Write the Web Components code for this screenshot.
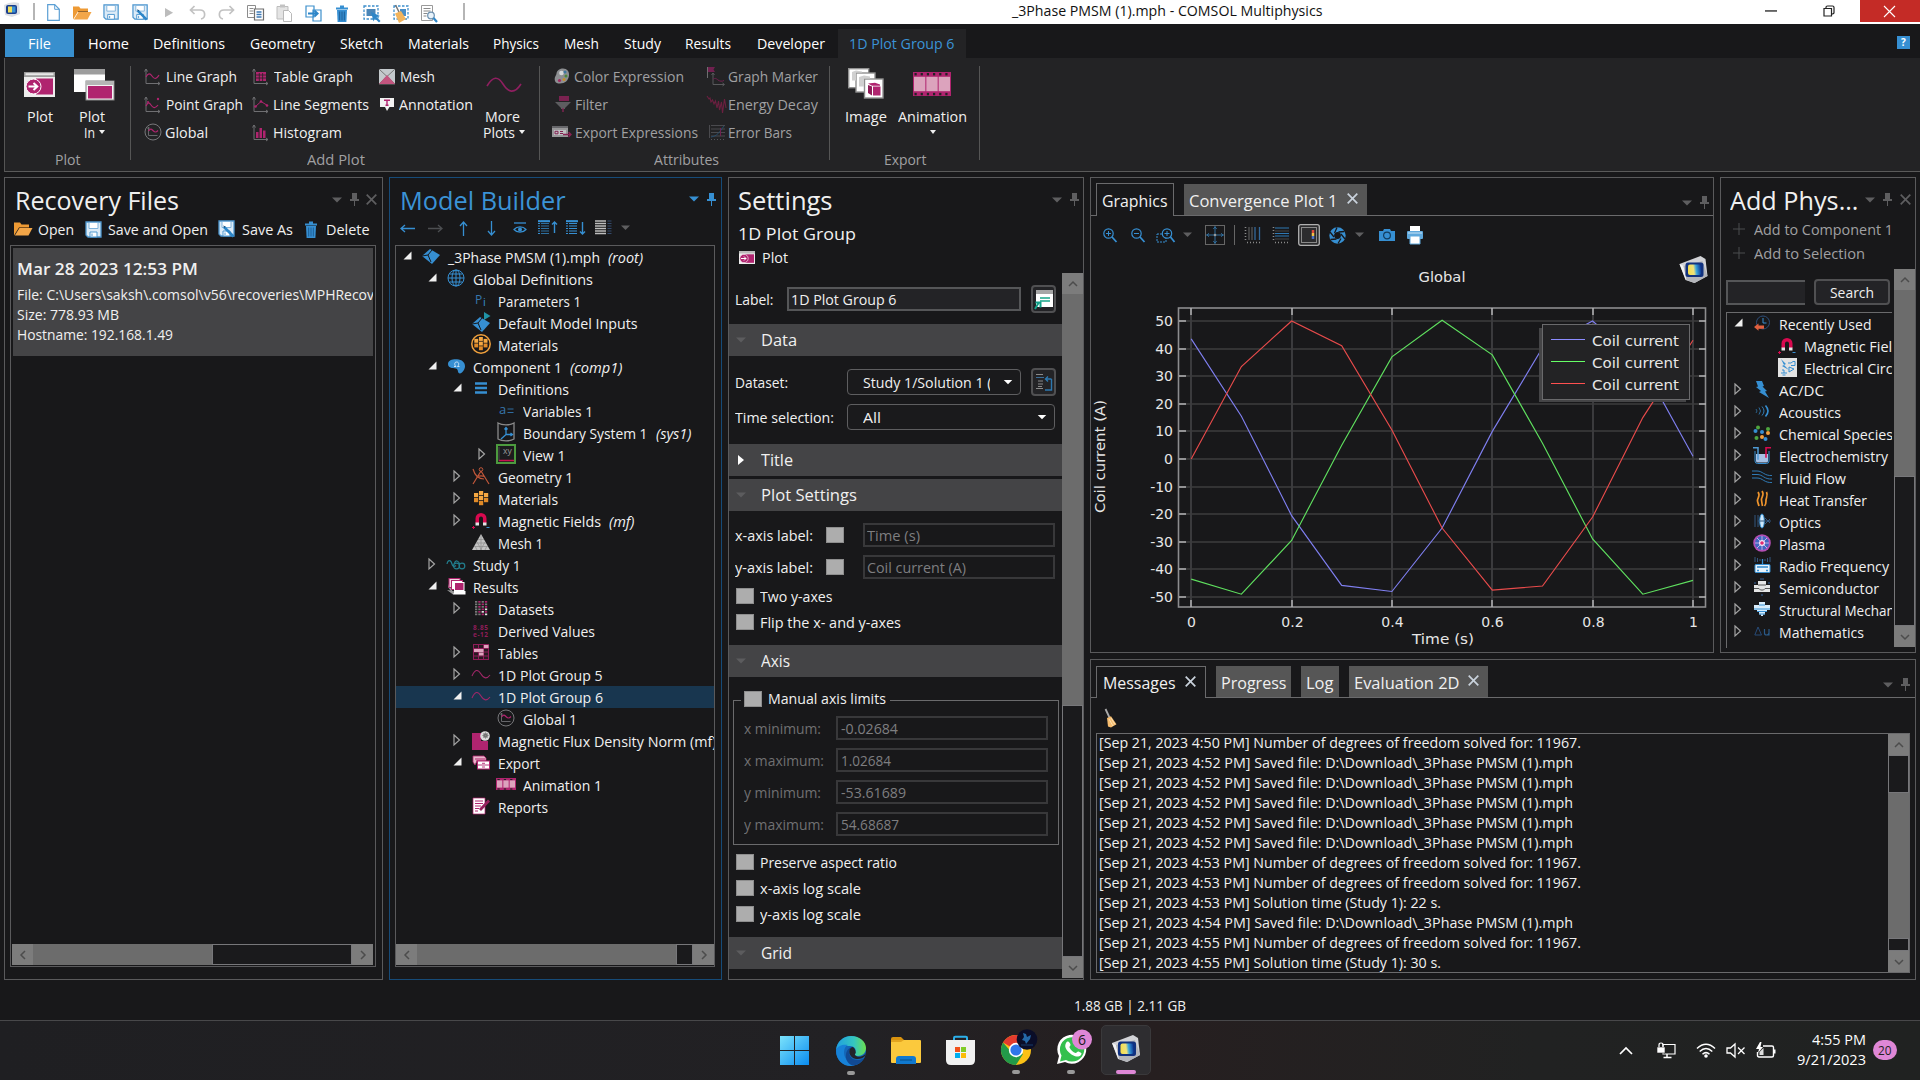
<!DOCTYPE html>
<html lang="en">
<head>
<meta charset="utf-8">
<title>_3Phase PMSM (1).mph - COMSOL Multiphysics</title>
<style>
html,body{margin:0;width:1920px;height:1080px;overflow:hidden;background:#18181a}
body{font-family:"Open Sans","Noto Sans",sans-serif;font-size:14.5px;color:#f0f0f0}
</style>
</head>
<body>
<comsol-app></comsol-app>
<script>
const B='#368fd2', M='#b0246f', G='#8c8c8c';
const sine=(c,w=1.3)=>`<path d="M1 8C5 0 8 2 10 6s5 7 9 0" fill="none" stroke="${c}" stroke-width="${w}"/>`;
const axes=`<path d="M2 1v14.500H16M.5 3.500L2 1l1.500 2.500M14 14l2 1.500-2 1.500" fill="none" stroke="#6f6f72"/>`;
const floppy=(bg)=>`<path d="M1 1h15v15H3l-2-2z" fill="${bg}" stroke="#4e97cf" stroke-width="1.300"/><path d="M4 1.500h9v6H4z" fill="#fff" stroke="#7fb3dc"/><path d="M5 11h7v5H5z" fill="#fff" stroke="#4e97cf"/><path d="M7 12.500v2.500" stroke="#4e97cf"/>`;
const film=(w,h)=>{let s=`<rect width="${w}" height="${h}" fill="${M}"/>`;const n=Math.round(w/6);for(let i=0;i<n;i++){const x=1.5+i*(w-1)/n;s+=`<rect x="${x}" y="1" width="2.200" height="${h*.1}" fill="#232325"/><rect x="${x}" y="${h*.87}" width="2.200" height="${h*.1}" fill="#232325"/>`}const f=(w-4)/3;for(let i=0;i<3;i++)s+=`<rect x="${1+i*(f+1)}" y="${h*.2}" width="${f}" height="${h*.6}" fill="#dca3bd"/>`;return s};
const comsol=`<defs><linearGradient id="g" x1="0" x2="1" y1=".2" y2=".1"><stop offset="0" stop-color="#f5de4e"/><stop offset=".4" stop-color="#efe27a"/><stop offset=".6" stop-color="#3ba6dc"/><stop offset="1" stop-color="#0a2f8f"/></linearGradient></defs><path d="M1 9L22 1l5 3 2 17-13 7-9-3z" fill="#d2d3d7"/><path d="M1 9l4 2 3 14-1-1z" fill="#f4f4f4"/><path d="M5 11L24 6l5 15-13 7-8-3z" fill="#b4b6bb"/><rect x="7" y="7.500" width="18" height="14.500" rx="2.500" fill="#12327f"/><rect x="9.500" y="9.500" width="13" height="10.500" rx="2" fill="url(#g)"/>`;
const magnet=`<path d="M3.500 11V6.500a5.500 5.500 0 0 1 11 0V11h-3.500V6.500a2 2 0 0 0-4 0V11z" fill="#d9094f"/><path d="M3.500 10.500H7V13.500H3.500zM11 10.500h3.500V13.500H11z" fill="#e3e3e3"/><path d="M0 15.500h3M1.500 14v3" stroke="#d9094f"/><path d="M14.500 15.500h3" stroke="${B}"/>`;
const blocks=[[5,0],[0,2],[10,2],[5,5],[0,7],[10,7],[5,10]].map(([x,y])=>`<rect x="${x}" y="${y}" width="4.200" height="4.200" fill="${y>5?'#e08a28':'#f4a742'}"/>`).join('');
const trash=`<path d="M0 3.500h12M4 1.500h4" stroke="${B}" stroke-width="1.800"/><path d="M1 5h10l-.6 12H1.600z" fill="${B}"/><path d="M3.700 6.500v9M6 6.500v9M8.300 6.500v9" stroke="#1c5d94"/>`;
const cube=`<path d="M1 8l8-7 10 6-8 9z" fill="${B}"/><path d="M1 8l6-1 3 7M7 7l4-5" stroke="#18181a" fill="none"/>`;
const lines=(n,w,c,x=0)=>Array.from({length:n},(_,i)=>`<path d="M${x} ${1+i*2.500}h${w}" stroke="${c}"/>`).join('');
const ICONS={
 caret:[10,6,`<path d="M0 .5h10L5 5.500z" fill="currentColor"/>`],
 caretS:[6,4,`<path d="M0 0h6L3 4z" fill="currentColor"/>`],
 caretR:[6,10,`<path d="M0 0l6 5-6 5z" fill="currentColor"/>`],
 pin:[9,13,`<path d="M2 0h5v6h2v2H0V6h2z" fill="currentColor"/><path d="M4.500 8v5" stroke="currentColor"/>`],
 x:[11,11,`<path d="M.7.7l9.600 9.600M10.300.7L.7 10.300" stroke="currentColor" stroke-width="1.700"/>`],
 open:[9,9,`<path d="M8.500.5v8H.5z" fill="#f0f0f0"/>`],
 closed:[8,12,`<path d="M1 1l5.500 5L1 11z" fill="none" stroke="#a4a4a4" stroke-width="1.200"/>`],
 none:[1,1,''],
 bar:[2,17,`<rect width="2" height="17" fill="#b5b5b5"/>`],
 newdoc:[13,17,`<path d="M.7.7h7l4.600 4.600v11H.7z" fill="#fff" stroke="#5b9fd4" stroke-width="1.200"/><path d="M7.700.7v4.600h4.600" fill="none" stroke="#5b9fd4"/>`],
 folder:[19,14,`<path d="M0 13.500V.5h6l1.500 2H15v3H5z" fill="#ee9a34"/><path d="M5.500 6H18.500l-4 7.500H.8z" fill="#f3a648"/><path d="M5 5.500h10" stroke="#7b4b14" stroke-width=".8"/>`],
 save:[17,17,floppy('#dcebf7')],
 saveas:[18,18,floppy('#dcebf7')+`<path d="M6 7l9.500 9.500" stroke="#2d86c8" stroke-width="2.600"/><path d="M5 5.500l2.500 1-1 1.500z" fill="#174d7a"/>`],
 play:[10,11,`<path d="M0 0l9.500 5.500L0 11z" fill="#bcbcbc"/>`],
 undo:[18,15,`<path d="M5.500 1L1.500 5l4 4M2 5h9c6 0 6 8 1 9" fill="none" stroke="#c2c2c2" stroke-width="1.700"/>`],
 redo:[18,15,`<path d="M12.500 1l4 4-4 4M16 5H7C1 5 1 13 6 14" fill="none" stroke="#c2c2c2" stroke-width="1.700"/>`],
 copy:[17,16,`<path d="M.5.500h8v12h-8zM2.500 3.500h4M2.500 6h4M2.500 8.500h4" fill="#fff" stroke="#8c8c8c"/><path d="M7.500 4h9v11h-9z" fill="#fff" stroke="#6f6f6f" stroke-width="1.200"/><path d="M9.500 7h5M9.500 9.500h5M9.500 12h5" stroke="#3d79b5" stroke-width="1.300"/>`],
 paste:[17,18,`<path d="M1 2.500h11V15H1z" fill="#e4e4e4" stroke="#bdbdbd"/><path d="M4 .5h5v3H4z" fill="#c2c2c2"/><path d="M7.500 6.500h5l3 3v8h-8z" fill="#fff" stroke="#b9b9b9"/>`],
 dup:[17,17,`<path d="M1 1h8v11H1zM8 5h8v11H8z" fill="#fff" stroke="#3d8fcc" stroke-width="1.200"/><path d="M3 8.500h9.500M9.500 5.500l3.200 3-3.200 3" fill="none" stroke="#2d86c8" stroke-width="1.800"/>`],
 trash:[12,17,trash],
 select:[18,18,`<path d="M1 1h14v13H1z" fill="none" stroke="#3d8fcc" stroke-width="1.300" stroke-dasharray="2.500 1.500"/><path d="M3.500 4h9v7h-9z" fill="#4a86b8"/><path d="M8 7l9 4-3.500 1 4 4-1.500 1.500-4-4-1.500 3z" fill="#2d86c8"/>`],
 selbroom:[18,18,`<path d="M2 1h14v13H2z" fill="none" stroke="#3d8fcc" stroke-width="1.300" stroke-dasharray="2.500 1.500"/><path d="M8 4h6v7H8z" fill="#4a8fc8"/><path d="M3.500 0l4 8" stroke="#777" stroke-width="1.600"/><path d="M3 8.500l6-2.500 5 8-7 4z" fill="#f2b45c"/>`],
 find:[17,18,`<path d="M.5.500h11v15H.5z" fill="#fff" stroke="#9a9a9a"/><path d="M2.500 3.500h7M2.500 6h7M2.500 8.500h4M2.500 11h3" stroke="#8a8a8a"/><circle cx="10" cy="10.500" r="3.300" fill="#e8f3fb" stroke="#6b8fae" stroke-width="1.200"/><path d="M12.500 13l3.500 4" stroke="#2d86c8" stroke-width="2.200"/>`],
 broom:[13,20,`<path d="M1.500 1l4 8.500" stroke="#aaa" stroke-width="1.800"/><path d="M3 10l4-1.700 5.500 8-5.500 3.200-3-1z" fill="#f7bd6f"/><path d="M5 11l4 7M7 10l4 6.500" stroke="#fbe0b4"/>`],
 help:[13,13,`<rect width="13" height="13" fill="${B}"/><text x="6.500" y="10.300" font-size="10" font-weight="700" fill="#fff" text-anchor="middle">?</text>`],
 min:[12,2,`<rect width="12" height="1.300" y=".3" fill="#222"/>`],
 restore:[12,12,`<path d="M1 3.500h7.500V11H1zM3 3.500V2.300Q3 1 4.500 1H9.500Q11 1 11 2.500V7.500Q11 9 8.700 9" fill="none" stroke="#222" stroke-width="1.200"/>`],
 closeW:[13,13,`<path d="M1 1l11 11M12 1L1 12" stroke="#fff" stroke-width="1.100"/>`],
 plot:[31,25,`<rect width="31" height="25" fill="#ededed"/><rect x="0" y="0" width="31" height="5" fill="#9d9d9d"/><rect x="1.500" y="1.200" width="28" height="2" fill="#e8e8e8"/><rect x="12" y="6.500" width="17" height="16" fill="${M}"/><circle cx="9.500" cy="14.500" r="7.500" fill="${M}" stroke="#fff"/><path d="M4.500 14.500h8M9.500 11l3.800 3.500-3.800 3.500" fill="none" stroke="#fff" stroke-width="2"/>`],
 plotS:[16,13,`<rect width="16" height="13" fill="#ededed"/><rect width="16" height="2.500" fill="#bbb"/><rect x="6" y="3.300" width="9" height="8.500" fill="${M}"/><circle cx="5" cy="7.500" r="4.200" fill="${M}" stroke="#fff" stroke-width=".6"/><path d="M2 7.500h5M5 5.500l2 2-2 2" fill="none" stroke="#fff"/>`],
 plotin:[40,31,`<rect width="31" height="23" fill="#fff"/><rect width="31" height="5.500" fill="#9d9d9d"/><rect x="12" y="12" width="28" height="19" fill="#f4f4f4" stroke="#888"/><rect x="12" y="12" width="28" height="4" fill="#b5b5b5"/><rect x="14" y="17" width="24" height="12.500" fill="${M}"/>`],
 linegraph:[17,17,axes+`<path d="M2 9c2-4 4-4 6-1s4 4 7-1" fill="none" stroke="${M}" stroke-width="1.200"/>`],
 pointgraph:[17,17,axes+`<path d="M2 10c2-4 3-4 5-1s4 4 7 0" fill="none" stroke="${M}" stroke-width="1.200"/><circle cx="14" cy="3" r="1.200" fill="${M}"/><circle cx="4" cy="6" r="1" fill="${M}"/>`],
 global:[18,18,`<circle cx="9" cy="9" r="8" fill="none" stroke="#77777a"/><path d="M4.500 4v8.500h9M3.500 5.500l1-1.500 1 1.500" fill="none" stroke="#66666a"/><path d="M4.500 8c2-3 3-2 5 0s3 1 4.500-.5" fill="none" stroke="${M}" stroke-width="1.200"/>`],
 tablegraph:[17,17,axes+`<path d="M4 4h10v9H4z" fill="${M}"/><path d="M4 7h10M4 10h10M7.300 5v8M10.600 5v8" stroke="#232325" stroke-width=".8"/>`],
 segments:[17,17,axes+`<path d="M3 11l6-5.500L15.500 9.500" fill="none" stroke="${M}"/><circle cx="3.500" cy="10.500" r="1.300" fill="${M}"/><circle cx="9" cy="5.500" r="1.300" fill="${M}"/><circle cx="15" cy="9.500" r="1.300" fill="${M}"/>`],
 histogram:[17,17,axes+`<path d="M4 8h2.500v6H4zM7.500 4H10v10H7.500zM11 6.500h2.500V14H11z" fill="${M}"/>`],
 meshp:[16,15,`<rect width="16" height="15" fill="#c4c9cc"/><path d="M0 0l8 7.500L16 0M0 15L8 7l8 8z" fill="none" stroke="#777"/><path d="M0 15L8 6l8 9z" fill="#c4557f"/>`],
 annot:[14,13,`<path d="M0 0h14v9H9.500L7 13 5 9H0z" fill="#f2f2f2"/><path d="M4 2.300h6M7 2.300v5M5.500 7.300h3" stroke="${M}" stroke-width="1.400"/>`],
 more:[36,18,`<path d="M1 10C7 0 12 0 17 8s11 11 18 0" fill="none" stroke="#8f1f60" stroke-width="1.600"/>`],
 color:[16,16,`<path d="M1 13C0 9 2 8 2.500 5.500 3 2 6 .5 9 .5c4 0 6.500 3 6 7-.5 5-4 8-9 8-2.500 0-4.500-.5-5-2.500z" fill="#8d8f92"/><circle cx="7.500" cy="5" r="2.300" fill="#d5d7d8"/><circle cx="11" cy="4" r="1.500" fill="#3c77a0"/><circle cx="12" cy="8" r="1.500" fill="#4a8a3a"/><circle cx="10" cy="11.500" r="1.500" fill="#c48f2a"/><circle cx="5.500" cy="12.500" r="1.600" fill="#a02d62"/>`],
 filter:[16,16,`<rect x="4" width="10" height="5" fill="#7a2250"/><path d="M0 6h16l-6 6v1H6v-1z" fill="#5d5d60"/><path d="M8 12v4" stroke="#8a2457" stroke-width="1.300"/>`],
 expexpr:[20,12,`<rect width="16" height="11" fill="#98989a"/><rect width="16" height="2" fill="#66666a"/><path d="M2 4h12v5H2z" fill="#c0c0c2"/><path d="M3 5.300h3v2.500H3zM8 5.500h3M8 7.500h3" stroke="#802050" fill="none"/><path d="M11 8.500h8M16.500 6l2.500 2.500-2.500 2.500" fill="none" stroke="#8b2355" stroke-width="1.300"/>`],
 marker:[19,19,`<path d="M1.500 0v11" stroke="#6e6e70"/><path d="M2 0h7L7.500 2.500 9 5H2z" fill="#70204f"/><path d="M7 6v11.500h11M5.500 8L7 6l1.500 2M16.500 16l2 1.500-2 1.500" fill="none" stroke="#59595c"/><path d="M7 12.500c2-2 3-1 5 .5s4 1.500 6 .5" fill="none" stroke="#70204f"/>`],
 decay:[20,19,`<path d="M1 1l2 3 1-1 1 4 1.500-2L8 9l1.500-3 1.500 7 1.500-7 1 9 2-8 1 11 2-14 1.500 9" fill="none" stroke="#6c1f40" stroke-width="1.100"/>`],
 errbar:[17,17,`<path d="M1.500 1v13M3 1.500h14M3 5h14M3 8.500h14M3 12h14" stroke="#4a4a4e"/><path d="M3 13c6-1 8-4 13-11" fill="none" stroke="#274c6a"/><path d="M12.500 4v8" stroke="#70204f"/><path d="M3 15.500h14" stroke="#55555a" stroke-dasharray="1 2"/>`],
 image:[36,31,`<g stroke="#909090" stroke-width="1.400"><rect x=".7" y=".7" width="20" height="19" fill="#fff"/><rect x="8" y="5" width="19" height="19" fill="#fff"/><rect x="16.500" y="11" width="18.500" height="19" fill="#fff"/></g><path d="M4 4l4-1.500 6 1v1H8v8H4zM11 9l5-1.500 6 1v2h-6v8h-5z" fill="#d0d0d0"/><path d="M20 17l4 1.500v9L20 25z" fill="#8f1c58"/><path d="M25 18.500h7.500v9H25zM20 15.500l7-.8 5 1.800v1.200h-8z" fill="${M}"/>`],
 anim:[38,24,film(38,24)],
 animS:[20,12,film(20,12)],
 left:[15,9,`<path d="M15 4.500H1M5 1L1 4.500 5 8" fill="none" stroke="${B}" stroke-width="1.300"/>`],
 right:[15,9,`<path d="M0 4.500h14M10 1l4 3.500L10 8" fill="none" stroke="#4c4e51" stroke-width="1.300"/>`],
 up:[9,15,`<path d="M4.500 15V1M1 5l3.500-4L8 5" fill="none" stroke="${B}" stroke-width="1.300"/>`],
 down:[9,15,`<path d="M4.500 0v14M1 10l3.500 4L8 10" fill="none" stroke="${B}" stroke-width="1.300"/>`],
 eye:[14,12,`<path d="M1 1h12" stroke="${B}" stroke-width="1.300"/><path d="M1 7.500c3-3.500 9-3.500 12 0-3 3.500-9 3.500-12 0z" fill="none" stroke="${B}" stroke-width="1.200"/><circle cx="7" cy="7.500" r="2" fill="${B}"/>`],
 listup:[20,16,lines(6,2,B)+lines(6,8,'#2d6f9f',3)+`<path d="M0 1.200h12" stroke="${B}" stroke-width="2"/><path d="M16.500 13V2M14 4.500L16.500 2 19 4.500" fill="none" stroke="${B}" stroke-width="1.400"/>`],
 listdn:[20,16,lines(6,2,B)+lines(6,8,B,3)+`<path d="M0 1.200h12" stroke="${B}" stroke-width="2"/><path d="M16.500 2v12M14 11.500l2.500 2.500 2.500-2.500" fill="none" stroke="${B}" stroke-width="1.400"/>`],
 list:[17,16,lines(6,11,'#bdbdbd').replace(/<path/g,'<path stroke-width="1.500"')+lines(6,4,'#33496b',12.5)],
 root:[20,17,cube],
 globe:[18,18,`<g fill="none" stroke="${B}"><circle cx="9" cy="9" r="8"/><ellipse cx="9" cy="9" rx="4" ry="8"/><path d="M9 1v16M1 9h16M2.500 5h13M2.500 13h13"/></g>`],
 pi:[12,13,`<text x="0" y="10" font-size="12" fill="#3777ad">P</text><text x="8" y="12" font-size="11" fill="${B}">i</text>`],
 dmi:[20,20,`<g transform="translate(0 4)">${cube}</g><path d="M13 0l6.500 4-6.500 4z" fill="#2093a6"/>`],
 matg:[20,20,`<circle cx="10" cy="10" r="9.200" fill="none" stroke="#f0a03c" stroke-width="1.500"/><g transform="translate(3.300 3) scale(.93)">${blocks}</g>`],
 mat:[14.500,14.500,blocks],
 comp:[17,15,`<path d="M0 5C0 1 5 0 9 .3c5 .4 8 3 8 7 0 3.500-3 7-5 7.200C9 14.500 11 10.500 8 9.500 4 9 0 9 0 5z" fill="${B}"/><path d="M6 7.500h2c-1.800-1.500-1.800-4.500.7-4.500s2.500 3 .8 4.500h2" fill="none" stroke="#d9ecfa" stroke-width=".9"/>`],
 defs:[12,12,`<path d="M0 1.500h12M0 6h12M0 10.500h12" stroke="${B}" stroke-width="2.600"/>`],
 vars:[15,12,`<text x="0" y="10" font-size="13" fill="#3777ad">a</text><path d="M8.500 5h6M8.500 8.500h6" stroke="#2f6ca0"/>`],
 bsys:[18,20,`<path d="M1 1c4 2.500 12 2.500 16 0v16c-4 2.500-12 2.500-16 0z" fill="none" stroke="#8a8a8a" stroke-width="1.300"/><path d="M9 6v6.500h6M9 12.500L4 17M7.500 7.500L9 5.500l1.500 2M13.500 11l2 1.500-2 1.500" fill="none" stroke="${B}" stroke-width="1.300"/>`],
 view:[20,20,`<rect x="1" y="1" width="18" height="18" fill="#1c1c1e" stroke="#4c9a3e" stroke-width="2"/><text x="7" y="10" font-size="8.500" fill="#9a9a9a">xy</text><path d="M3 3v14" stroke="#4a4a4a"/><path d="M3 16.500h15" stroke="#c8134f" stroke-width="1.500"/>`],
 geom:[18,18,`<path d="M1 2c2 7 5 10 11 10M9 4L1 17M9 4l8 13M5 9.500c3-1 5-1 8 0" fill="none" stroke="#c1573a" stroke-width="1.200"/><circle cx="9" cy="2.500" r="1.800" fill="none" stroke="#c1573a"/>`],
 magnet:[18,17,magnet],
 mesh:[18,16,`<path d="M9 0l9 16H0z" fill="#c2c2c2"/><path d="M6 5.500h6M4 9h10M2 12.500h14M9 1v15M5 8l4.500 8M13 8l-4.500 8M3 12l2 4M15 12l-2 4" stroke="#8c8c8c" stroke-width=".7"/>`],
 study:[20,11,`<g fill="none" stroke="#227c8c" stroke-width="1.200"><path d="M1 5C2 0 5 1 6 5c.5 2 2 3.500 4 1.500"/><ellipse cx="10.500" cy="7" rx="3" ry="2.800"/><ellipse cx="16" cy="7" rx="2.800" ry="2.800"/><path d="M8 5c2-5 4-3 6 0"/></g>`],
 results:[19,17,`<path d="M1 9l2-7h2v12l4 2H6z" fill="#9a9a9a"/><rect x="2" y=".5" width="11" height="9" fill="#f1d5e0" stroke="${M}"/><rect x="4.500" y="2.500" width="11" height="9" fill="#fff" stroke="${M}"/><rect x="7.500" y="4.500" width="9.500" height="8" fill="${M}" stroke="#fff"/><path d="M7 13h11.500v3.500H6z" fill="#fff"/><path d="M0 12l7 1-1 3.500z" fill="#9a9a9a"/>`],
 datasets:[13,15,Array.from({length:6},(_,j)=>Array.from({length:4},(_,i)=>`<rect x="${i*3.3}" y="${j*2.500}" width="2.300" height="1.700" fill="${(i+j)%2&&i?M:(i>1&&j>2?'#e0e0e0':'#777')}"/>`).join('')).join('')],
 derived:[16,13,`<text x="0" y="6" font-size="6.500" font-weight="700" textLength="15" fill="#8f1d59">8.85</text><text x="0" y="12.500" font-size="6.500" font-weight="700" textLength="15" fill="#8f1d59">e-12</text>`],
 tables:[16,16,`<rect x=".5" y=".5" width="15" height="15" fill="#2a1822" stroke="#8f1d59"/><path d="M.5 4.500h15M.5 8h15M.5 12h15M5.500 0v16M10.500 0v16" stroke="#8f1d59"/><path d="M11 1h4.500v3H11zM1 5h9.500v3H1zM6 8.500h4.500v3H6z" fill="#dfa3bf"/>`],
 pg:[18,10,`<path d="M0 7C3 0 6 0 9 5s6 5 9 1" fill="none" stroke="#a02768" stroke-width="1.100"/>`],
 flux:[18,19,`<path d="M0 2h9v8h7v9H0z" fill="${M}"/><circle cx="13" cy="5" r="4.800" fill="#dcdcdc"/><circle cx="13.500" cy="4.500" r="2.300" fill="#555"/><path d="M13.500 1v7M10 4.500h7M11 2l5 5M16 2l-5 5" stroke="#888" stroke-width=".6"/>`],
 export:[17,15,`<path d="M0 1h11l2 2v3H4L2 10 0 7z" fill="#e7b8cb" stroke="${M}" stroke-width=".8"/><path d="M2 4h10M3 6h10" stroke="${M}"/><rect x="4.500" y="6" width="12" height="8" fill="#fff" stroke="${M}"/><path d="M5 10h11M9 8.300h3M9 12h3" stroke="${M}" stroke-width=".9"/>`],
 reports:[17,16,`<path d="M0 0h12v16H0z" fill="#fff" stroke="#b0246f" stroke-width=".7"/><path d="M2 3h8M2 5.500h8M2 8h6M2 10.500h4M2 13h3" stroke="${M}"/><path d="M7 12L16 2.500" stroke="#96205d" stroke-width="2.800"/>`],
 gotoL:[18,19,`<rect x="1" y="0" width="17" height="17" fill="#fff"/><rect x="1" width="17" height="4" fill="#a6a6a6"/><path d="M5 8h10M5 11h10" stroke="#17a589" stroke-width="1.500"/><path d="M0 19l3.500-6M.5 12.500h5v5" stroke="#12a088" stroke-width="2" fill="none"/>`],
 gotoS:[18,18,`<path d="M1 1.500h7M1 4.500h5M3 8h5M3 11h5M1 15.500h7M3 13.500h4" stroke="#8a8a8a"/><path d="M1 4.500h8" stroke="#3b6d98"/><path d="M16.500 6v11H10M16.500 6H11M13 3.500L10.500 6l2.500 2.500" fill="none" stroke="#2d78b0" stroke-width="1.400"/>`],
 zin:[14,15,`<circle cx="5.500" cy="5.500" r="4.700" fill="none" stroke="${B}" stroke-width="1.200"/><path d="M3 5.500h5M5.500 3v5" stroke="${B}"/><path d="M9 9l4.500 5" stroke="${B}" stroke-width="1.800"/>`],
 zout:[14,15,`<circle cx="5.500" cy="5.500" r="4.700" fill="none" stroke="${B}" stroke-width="1.200"/><path d="M3 5.500h5" stroke="${B}"/><path d="M9 9l4.500 5" stroke="${B}" stroke-width="1.800"/>`],
 zbox:[19,15,`<path d="M1 6h9v8H1z" fill="none" stroke="${B}" stroke-dasharray="2 1"/><circle cx="11" cy="5.500" r="4.700" fill="#18181a" stroke="${B}" stroke-width="1.200"/><path d="M8.500 5.500h5M11 3v5" stroke="${B}"/><path d="M14.500 9l4 5" stroke="${B}" stroke-width="1.800"/>`],
 extents:[20,20,`<rect x=".5" y=".5" width="19" height="19" fill="none" stroke="#666"/><path d="M10 1v18M1 10h18M8.300 4L10 2l1.700 2M8.300 16l1.700 2 1.700-2M4 8.300L2 10l2 1.700M16 8.300l2 1.700-2 1.700" fill="none" stroke="#3276aa" stroke-width=".9"/><circle cx="10" cy="10" r="1.300" fill="#999"/>`],
 gridv:[17,18,`<path d="M1.500 1v13M3 16.500h14" stroke="#8a8a8a" stroke-width="1.600" stroke-dasharray="1 2"/><path d="M5 1v13M8 1v13" stroke="#666"/><path d="M11 1v13M15.500 1v13" stroke="#33689a" stroke-width="1.300"/>`],
 gridh:[17,18,`<path d="M1.500 1v13M3 16.500h14" stroke="#8a8a8a" stroke-width="1.600" stroke-dasharray="1 2"/><path d="M3 2h14M3 7.500h14M3 10h14" stroke="#2f78b2" stroke-width="1.200"/><path d="M3 5h14M3 13h14" stroke="#444"/>`],
 legendi:[22,22,`<rect x=".7" y=".7" width="20.600" height="20.600" rx="2" fill="#2c2c2e" stroke="#b0b0b0" stroke-width="1.300"/><rect x="3.500" y="3.500" width="15" height="15" fill="none" stroke="#8a8a8a"/><path d="M15 6v3" stroke="#e04a3a" stroke-width="2.500"/><path d="M15 9v3" stroke="#f4c14a" stroke-width="2.500"/><path d="M15 12v3" stroke="#4d6fc0" stroke-width="2.500"/>`],
 aperture:[17,17,`<circle cx="8.500" cy="8.500" r="5.800" fill="none" stroke="${B}" stroke-width="4.800"/><path d="M8 .5L5.500 6M15.500 4.500L9.500 5M16 12l-4-5M9 16.500l3-5M1.500 12.500l6-.5M1 5l4 5" stroke="#18181a" stroke-width="1.300"/>`],
 camera:[16,12,`<path d="M0 2h4l1-2h6l1 2h4v10H0z" fill="${B}"/><circle cx="8" cy="6.500" r="3.400" fill="none" stroke="#123c5e" stroke-width="1.200"/>`],
 printer:[16,18,`<path d="M3 0h10v6H3z" fill="#fff"/><rect y="5" width="16" height="8" rx="1" fill="#5fa8dc"/><path d="M1 7h14" stroke="#c9e3f5"/><path d="M3 10h10v8H3z" fill="#fff" stroke="#5fa8dc"/>`],
 comsol:[30,29,comsol],
 comsolS:[16,15,`<path d="M0 3Q7-1 15 1l1 11-8 3-7-2z" fill="#dcdfe4"/><rect x="2" y="3" width="11" height="9" rx="2" fill="#1a3f8e"/><path d="M4 4.500h4v6H4z" fill="#f0e05a"/><path d="M8 4.500h3.500v6H8z" fill="#3b93d4"/>`],
 plus:[12,12,`<path d="M6 0v12M0 6h12" stroke="#4a4c4f"/>`],
 recent:[16,16,`<circle cx="9" cy="7.500" r="6.500" fill="none" stroke="#2d4d78"/><path d="M9 3v5h3.500" fill="none" stroke="${B}"/><path d="M0 12l4.500-3.500v2H10v3.200H4.500v2z" fill="#e2603f"/>`],
 circ:[19,19,`<rect width="19" height="19" fill="#e3e3e3"/><path d="M10 5h3l2-1.500h2v4h-4M11 9l5 2-5 3zM3 15h6M4.500 17h3M6 15v-3H4" fill="none" stroke="${B}"/><path d="M3 1l5 5-2 1 5 5-7-4 2-1z" fill="${B}"/>`],
 acdc:[14,17,`<path d="M1 0h6l2 5-1.500.5L12 10l-2 .5L14 17 4 11l2-1L1 6l2-.5z" fill="${B}"/>`],
 acou:[14,12,`<g fill="none" stroke="${B}"><path d="M1 4q2 2 0 4" opacity=".6"/><path d="M4 2.500q3 3.500 0 7" opacity=".7"/><path d="M7 1.500q4 4.500 0 9" opacity=".85"/><path d="M10.500.5q5 5.500 0 11" stroke-width="1.600"/></g>`],
 chem:[16,14,[[4,1.500,'#4fa53f'],[14,3,'#4fa53f'],[1.500,5,B],[8,6,B],[14,7,'#f3a03c'],[2.500,12,'#4fa53f'],[8,11,'#f3a03c'],[11.500,13,B]].map(([x,y,c])=>`<circle cx="${x}" cy="${y}" r="2" fill="${c}"/>`).join('')],
 echem:[18,17,`<path d="M2 4v10q0 2.500 2.500 2.500h9Q16 16.500 16 14V4" fill="none" stroke="${B}"/><path d="M3 7h12v7q0 1.500-1.500 1.500h-9Q3 15.500 3 14z" fill="#a7c0e4"/><path d="M0 .7h5v12" fill="none" stroke="#4f9bd6" stroke-width="1.500"/><path d="M18 .7h-5v10" fill="none" stroke="#d9094f" stroke-width="1.600"/>`],
 fluid:[20,14,`<g fill="none" stroke="#2f7ab5"><path d="M0 1h5c6 0 7 5 15 4.500"/><path d="M0 4.500h5c6 0 7 5 15 4.500M0 8h5c6 0 7 5 15 4.500"/></g>`],
 heat:[12,16,`<g fill="none" stroke="#f0952c" stroke-width="1.700"><path d="M2 1c3 4-1 6-.5 9 .3 2 1 3 1.500 5M6 0c3 4-1 6-.5 9 .3 2 .5 4 1 6M10.500 1c2 4-1 6-.5 9 0 2-.5 4-1.500 5"/></g>`],
 optics:[17,14,`<path d="M1 1v12M4 1v12" stroke="#33567e"/><ellipse cx="8" cy="7" rx="2.300" ry="7" fill="#cfe8fa" stroke="${B}"/><path d="M4 7h13M11 4l5 5M11 10l5-5" stroke="#33567e"/>`],
 plasma:[18,18,`<circle cx="9" cy="9" r="8.800" fill="#b34fb5"/><circle cx="9" cy="9" r="7" fill="#3f68c0"/><path d="M9 2v14M2 9h14M4 4l10 10M14 4L4 14" stroke="#c9a8e6"/><circle cx="9" cy="9" r="3" fill="#f0e8f8"/><circle cx="9" cy="9" r="1.800" fill="#e0296f"/>`],
 radio:[17,18,`<path d="M1 1v5M3.500 2v4M13.500 2v4M16 1v5M6 3v2M11 3v2" stroke="#33567e"/><path d="M8.500 3v6" stroke="${B}" stroke-width="1.300"/><rect x="1" y="8.500" width="15" height="8" rx="1" fill="#e8f3fb" stroke="${B}"/><path d="M3 11h11" stroke="${B}" stroke-width="1.600"/><path d="M3 14.500h2M12 14.500h2" stroke="${B}" stroke-width="1.500"/>`],
 semi:[18,19,`<path d="M5 3h8v4h4v7H1V7h4z" fill="#e6e6e6"/><path d="M5 7h8M1 10.500h5l1.500 1.500h3L12 10.500h5" stroke="#555" fill="none"/><path d="M1 5h2M7 1h4M15 5h2M8 17h2" stroke="#2c4a70" stroke-width="1.500"/>`],
 struct:[16,14,`<path d="M5 0h6v3h5v5h-3v2h-2v2.500H9V14H7v-1.500H5V10H3V8H0V3h5z" fill="#d8ecfa"/><path d="M0 7h16M3 9.500h10M5 12h6M5 3h6" stroke="${B}" stroke-width="1.200"/>`],
 math:[16,11,`<path d="M.8 9L4 1l3.500 8z" fill="none" stroke="#274a77"/><path d="M10.500 3v4q0 2 2 2t2.500-2V3M15 7v2.500" fill="none" stroke="#2a5a88" stroke-width="1.200"/>`],
 win:[29,29,`<defs><linearGradient id="w" x1="0" y1="0" x2="1" y2="1"><stop offset="0" stop-color="#7be3fb"/><stop offset="1" stop-color="#0a8cf0"/></linearGradient></defs><path d="M0 0h14v14H0zM15 0h14v14H15zM0 15h14v14H0zM15 15h14v14H15z" fill="url(#w)"/>`],
 edge:[30,30,`<defs><linearGradient id="a" x1="0" x2="1"><stop offset="0" stop-color="#1f9fe0"/><stop offset=".6" stop-color="#35c6c0"/><stop offset="1" stop-color="#6be04f"/></linearGradient></defs><circle cx="15" cy="15" r="15" fill="#1467b8"/><path d="M0 14C1 5 8 0 15 0c9 0 15 6 15 12 0 5-4 8-8 8-3 0-4-1.500-3-3 2-4-1-7-5-7C8 10 2 10 0 14z" fill="url(#a)"/><path d="M0 14c2-5 8-6 12-5-5 2-6 12 1 17 3 2 5 3 5 3.500C9 31.500 0 26 0 14z" fill="#1782d8"/><path d="M17 11c-5 2-5 9 0 12 4 2 8 1 11-1-2 4-6 7-11 7.500C8 28 7 12 17 11z" fill="#114a94"/><path d="M30 17c-2 4-9 5-11 2-.5-.8.5-1 .8-2.500C19.500 13 18 11.500 16.500 11 11 13 13 22 20 23c4 .5 7-1 9-3z" fill="#23232a"/>`],
 files:[30,27,`<path d="M0 2q0-2 2-2h8l3 3h-13z" fill="#d9930f"/><path d="M0 3h29q1 0 1 1v21q0 1-1 1H1q-1 0-1-1z" fill="#fbc93d"/><path d="M0 5h10l3-2H0z" fill="#e3a51f"/><path d="M5 27v-5q0-3 3-3h14q3 0 3 3v5z" fill="#1079cf"/><path d="M9 23h12" stroke="#0a5796" stroke-width="1.300"/>`],
 store:[29,29,`<path d="M8 6V2q0-1.300 1.300-1.300h10.500Q21 .7 21 2v4" fill="none" stroke="#2cb0ea" stroke-width="2"/><path d="M0 4h29v20q0 5-5 5H5q-5 0-5-5z" fill="#f1f1f1"/><path d="M9 11h5v5H9z" fill="#f1511b"/><path d="M15 11h5v5h-5z" fill="#80cc28"/><path d="M9 17h5v5H9z" fill="#00adef"/><path d="M15 17h5v5h-5z" fill="#fbbc09"/>`],
 chrome:[36,36,`<circle cx="15" cy="21" r="15" fill="#fbc116"/><path d="M15 21L2 13.500A15 15 0 0 1 28 13.500z" fill="#e33b2e"/><path d="M15 6a15 15 0 0 1 13 7.500H15z" fill="#e33b2e"/><path d="M2 13.500A15 15 0 0 0 15 36l7-11-7-4-6.500 0z" fill="#229a49"/><circle cx="15" cy="21" r="7.200" fill="#fff"/><circle cx="15" cy="21" r="5.600" fill="#2f76ea"/><circle cx="26" cy="10.500" r="10.300" fill="#0a0d28"/><path d="M22 4l3 1 1 3 4-2-1 4-4 5-1-3-3-1 2-3z" fill="#2368a8"/><path d="M20 16h12" stroke="#163d6a"/>`],
 whats:[36,36,`<path d="M1 35l2-8A14.500 14.500 0 1 1 9 33z" fill="#fff"/><path d="M4 32.500l1.500-6A12.200 12.200 0 1 1 10 31z" fill="#34c04e"/><path d="M10 14c2-3 3.500-1 4.500 1.500.5 1.200-1.500 2-1 3 1.500 3 3.500 4.500 6 5.500 1 .3 2-2 3-1.500 3 1.500 4 1.500 2 4-2 2-6 1-9-1-4-3-8-7-5.500-11.500z" fill="#fff"/><circle cx="26" cy="10.500" r="10" fill="#df87d6"/><text x="26" y="15.500" font-size="14" fill="#1a1a1a" text-anchor="middle">6</text>`],
 chev:[14,9,`<path d="M1 8l6-6 6 6" fill="none" stroke="#fff" stroke-width="1.700"/>`],
 net:[19,17,`<path d="M6 2.500h12v9.500H6z" fill="none" stroke="#fff" stroke-width="1.200"/><path d="M10 12v3M6.500 15.500h8" stroke="#fff" stroke-width="1.500"/><rect x="0" y="5" width="8" height="6" fill="#fff" stroke="#222" stroke-width=".6"/><path d="M2 5V3q0-2 2-2t2 2v2" fill="none" stroke="#fff" stroke-width="1.200"/>`],
 wifi:[20,15,`<g fill="none" stroke="#fff" stroke-width="1.500"><path d="M1 5.500q9-8.500 18 0M3.700 8.500q6.300-6 12.600 0M6.500 11.300q3.500-3.300 7 0"/></g><circle cx="10" cy="13" r="1.800" fill="#fff"/>`],
 mute:[20,15,`<path d="M1 5h3.500L9 1v13L4.500 10H1z" fill="none" stroke="#fff" stroke-width="1.300"/><path d="M12 4.500l6.500 6.500M18.500 4.500L12 11" stroke="#fff" stroke-width="1.300"/>`],
 batt:[20,17,`<path d="M7 4h9q1.500 0 1.500 1.500v8q0 1.500-1.500 1.500H3Q1.500 15 1.500 13.500V10" fill="none" stroke="#fff" stroke-width="1.400"/><path d="M18.500 7.500v4" stroke="#fff" stroke-width="2"/><path d="M4 0L0 7h3l-1 4 5-6H4.500L5.500 0z" fill="#fff"/><path d="M3.500 13V10l4-4v7z" fill="#ddd"/>`]
};
const BASE=`<style>:host{display:block;box-sizing:border-box}*{box-sizing:border-box}.r{display:flex;align-items:center;flex:none}.i{flex:none;display:flex;align-items:center;justify-content:center}.c{display:flex;flex-direction:column;align-items:stretch}
.btn{display:flex;align-items:center;justify-content:center;border:2px solid #505052;border-radius:4px;background:#232326}
.inp{background:#232326;border:2px solid #555658;display:flex;align-items:center;padding-left:3px;overflow:hidden}
.dis{background:#18181a;border-color:#38383a;color:#7e7e80}
.sel{background:#1a1a1c;border:1.500px solid #5e5e60;border-radius:4px;display:flex;align-items:center;overflow:hidden}
.cb{background:#adadad;border:1.500px solid #8e8e8e}</style>`;
/* Rows place [left, width, markup] items one after another; columns place [centre, height, items, style] rows. */
const row=(x0,h,items,st='')=>{let p=x0;return `<div class="r" style="height:${h}px;${st}">`+items.map(([x,w,c,s=''])=>{const m=x-p;p=x+w;return `<div class="i" style="margin-left:${m.toFixed(2)}px;width:${w}px;${s}">${c}</div>`}).join('')+'</div>'};
const col=(y0,x0,rows)=>{let p=y0;return rows.map(([y,h,items,st=''])=>{const t=y-h/2,m=t-p;p=t+h;return row(x0,h,items,`margin-top:${m}px;`+st)}).join('')};
const ft=(w,s,st='')=>`<fit-text w="${w}" style="${st}">${s}</fit-text>`;
const t=(x,w,s,st='')=>[x,w,ft(w,s,st)];
const ic=(xc,n,st='',k=1)=>{const w=ICONS[n][0]*k;return [xc-w/2,w,`<app-icon n="${n}" k="${k}" style="${st}"></app-icon>`]};
const icon=(n,st='')=>`<app-icon n="${n}" style="${st}"></app-icon>`;
const el=(name,html)=>customElements.define(name,class extends HTMLElement{connectedCallback(){if(this.shadowRoot)return;this.attachShadow({mode:'open'}).innerHTML=BASE+(typeof html==='function'?html(this):html)}});

customElements.define('fit-text',class extends HTMLElement{
 connectedCallback(){if(this.shadowRoot)return;
  this.attachShadow({mode:'open'}).innerHTML=`<style>:host{display:block;white-space:pre;flex:none;text-align:left}span{display:inline-block;transform-origin:0 50%}</style><span><slot></slot></span>`;
  const w=+this.getAttribute('w');this.style.width=w+'px';const s=this.shadowRoot.querySelector('span');
  const fit=()=>{s.style.transform='none';const n=s.getBoundingClientRect().width;if(n)s.style.transform=`scaleX(${w/n})`};
  fit();document.fonts.ready.then(fit)}
});
customElements.define('app-icon',class extends HTMLElement{
 connectedCallback(){if(this.shadowRoot)return;const [w,h,s]=ICONS[this.getAttribute('n')],k=+(this.getAttribute('k')||1);
  this.attachShadow({mode:'open'}).innerHTML=`<style>:host{display:block;flex:none}svg{display:block;overflow:visible}</style><svg width="${w*k}" height="${h*k}" viewBox="0 0 ${w} ${h}">${s}</svg>`}
});
el('scroll-bar',e=>{const v=e.getAttribute('dir')==='v',parts=e.getAttribute('parts').split(',');
 const arrow=d=>`<svg width="10" height="10" viewBox="0 0 10 10"><path d="${{u:'M1 7l4-4 4 4',d:'M1 3l4 4 4-4',l:'M7 1L3 5l4 4',r:'M3 1l4 4-4 4'}[d]}" fill="none" stroke="#4c4c4c" stroke-width="1.500"/></svg>`;
 const z=v?'height':'width';
 return `<style>:host{display:flex;flex:none;flex-direction:${v?'column':'row'};${v?'width:21px':'height:21px'}}.b{flex:none;width:21px;height:21px;background:#7c7c7c;display:flex;align-items:center;justify-content:center}.p{flex:none;background:#6c6c6c}.d{flex:none;background:#1a1a1c;border:1px solid #77777a}</style><div class="b">${arrow(v?'u':'l')}</div>${parts.map(p=>`<div class="${p[0]}" style="${z}:${p.slice(1)}px"></div>`).join('')}<div class="b">${arrow(v?'d':'r')}</div>`});

el('title-bar',`<style>:host{height:24px;background:#fff;color:#111;display:flex;align-items:flex-start}</style>`+row(0,22,[
 ic(12,'comsolS','margin-top:-4px'),ic(34,'bar'),ic(53,'newdoc','margin-top:3px'),ic(82.500,'folder','margin-top:3px'),ic(111,'save','margin-top:3px',.95),ic(140.500,'saveas','margin-top:3px',.95),ic(169,'play','margin-top:4px',.85),ic(198,'undo','margin-top:3px'),ic(226,'redo','margin-top:3px'),ic(255.500,'copy','margin-top:3px'),ic(284.500,'paste','margin-top:4px'),ic(314,'dup','margin-top:4px'),ic(342.500,'trash','margin-top:4px'),ic(372.500,'select','margin-top:5px'),ic(401.500,'selbroom','margin-top:5px'),ic(430,'find','margin-top:5px'),ic(464,'bar'),
 t(1012.500,310.500,'_3Phase PMSM (1).mph - COMSOL Multiphysics','margin-top:-2px'),ic(1771,'min'),ic(1829,'restore'),[1860,60,icon('closeW'),'height:22px;background:#c42b26']]));

const up='margin-top:-2px';
el('ribbon-tabs',`<style>:host{height:34px;padding-top:5px;font-size:15px;color:#fff}</style>`+row(0,29,[
 [5,69,ft(23,'File'),'height:28px;background:#388fce;align-self:flex-start'],t(88,41,'Home',up),t(152.500,72,'Definitions',up),t(250,65,'Geometry',up),t(340,43,'Sketch',up),t(408,61,'Materials',up),t(493,46,'Physics',up),t(564,35,'Mesh',up),t(624,37,'Study',up),t(685,46,'Results',up),t(756.500,68,'Developer',up),
 [838,128,ft(105.500,'1D Plot Group 6','color:#3b93d6;'+up),'height:29px;background:#232325'],ic(1903,'help',up)]));

const dim='color:#a0a0a2';
const sep=x=>[x,1,'<div style="width:1px;height:94px;background:#555"></div>'];
const colm=(x,w,rows)=>[x,w,`<div style="width:${w}px;height:110px">${col(59,x,rows)}</div>`];
el('ribbon-bar',`<style>:host{height:114px;margin-left:4px;background:#232325;border-left:1px solid #555;border-bottom:1px solid #5a5a5a}</style>`+row(5,110,[
 colm(5,124,[[85.500,32,[ic(39.500,'plot'),ic(94,'plotin')]],[117,16,[t(27,26,'Plot'),t(79,26,'Plot')]],[133,16,[t(84,11,'In'),ic(102,'caretS')]],[160,18,[t(55,25.500,'Plot',dim)]]]),
 sep(129.500),
 colm(131,408,[[77,18,[ic(152.500,'linegraph'),t(165.500,71,'Line Graph'),ic(260.500,'tablegraph'),t(274,79,'Table Graph'),ic(387,'meshp'),t(400,35,'Mesh'),[486,36,icon('more','margin-top:18px')]]],[105,18,[ic(152.500,'pointgraph'),t(165.500,77,'Point Graph'),ic(260.500,'segments'),t(273,96,'Line Segments'),ic(387,'annot'),t(399,74,'Annotation'),[485,35,ft(35,'More','margin-top:24px')]]],[133,18,[ic(153,'global'),t(165,43,'Global'),ic(260.500,'histogram'),t(273,69,'Histogram'),t(483,32,'Plots'),ic(522,'caretS')]],[160,18,[t(307,58,'Add Plot',dim)]]]),
 sep(539),
 colm(541,287,[[77,18,[ic(562,'color'),t(573.500,110,'Color Expression'),ic(715.500,'marker'),t(728,90,'Graph Marker')],dim],[105,18,[ic(562.500,'filter'),t(575,33,'Filter'),ic(715.500,'decay'),t(728,90,'Energy Decay')],dim],[133,18,[ic(562,'expexpr'),t(575,123,'Export Expressions'),ic(716,'errbar'),t(728,64,'Error Bars')],dim],[160,18,[t(653.500,65,'Attributes',dim)]]]),
 sep(829),
 colm(831,147,[[84.500,32,[ic(866,'image'),ic(932,'anim')]],[117,15,[t(845,42,'Image'),t(898,69,'Animation')]],[133,16,[ic(933,'caretS')]],[160,18,[t(884,42.500,'Export',dim)]]]),
 sep(979)]));

el('dock-panel',`<style>:host{display:flex;flex-direction:column;border:1px solid var(--edge,#5a5a5c);overflow:hidden}</style><slot></slot>`);
const gray='color:#5e5e60';
const big='font-size:25px;margin-top:-2px';

el('recovery-files',`<style>.box{flex:none;margin:0 6px 0 5px;height:722px;border:1px solid #5a5a5c;padding:2px 2px 0;display:flex;flex-direction:column}.card{height:108px;background:#444446;overflow:hidden}</style>
<dock-panel style="height:803px">`+col(178,5,[[200.500,36,[t(14.500,164,'Recovery Files',big),ic(336.500,'caret',gray+';margin-top:-2px'),ic(354,'pin',gray+';margin-top:-2px'),ic(371.500,'x',gray+';margin-top:-2px')]],
 [229,20,[ic(23.500,'folder'),t(37.500,36,'Open'),ic(93,'save'),t(107.500,100,'Save and Open'),ic(227,'saveas'),t(242,51,'Save As'),ic(310.500,'trash'),t(326,43.500,'Delete')]]])+
 `<div class="box" style="margin-top:6px"><div class="card">`+col(249,13,[[269,24,[t(17,181,'Mar 28 2023 12:53 PM','font-size:16.500px;font-weight:600')]],[295,20,[t(17,357,'File: C:\\Users\\saksh\\.comsol\\v56\\recoveries\\MPHRecov')]],[315,20,[t(17,102,'Size: 778.93 MB')]],[335,20,[t(17,156,'Hostname: 192.168.1.49')]]])+
 `</div><scroll-bar dir="h" parts="p179,d140" style="margin-top:588px;margin-left:-1px"></scroll-bar></div></dock-panel>`);

/* Tree rows: [level, state, icon, label, width, tag, tag width] */
el('tree-row',e=>{const d=JSON.parse(e.getAttribute('d')),[L,st,n,s,w,g,gw]=d;
 return `<style>:host{height:22px;display:flex;align-items:center;padding-left:${L*25}px;flex:none;${e.hasAttribute('on')?'background:#18364f;':''}}.e{width:24px;display:flex;justify-content:center;flex:none}.n{width:22px;display:flex;justify-content:center;flex:none;margin-right:6px}</style><div class="e">${icon(st,'margin-top:-3px;margin-left:-2px')}</div><div class="n">${icon(n,'margin-top:-2px')}</div>${ft(w,s)}${g?ft(gw,g,'margin-left:8px;font-style:italic'):''}`});
const tree=(rows,on)=>rows.map((r,i)=>`<tree-row d='${JSON.stringify(r)}'${i===on?' on':''}></tree-row>`).join('');
const o='open',c='closed',z='none';
el('model-builder',`<style>.box{flex:none;margin:7px 6px 0 5px;width:320px;height:722px;border:1px solid #5a5a5c;display:flex;flex-direction:column;overflow:hidden}.rows{height:698px;display:flex;flex-direction:column;flex:none;overflow:hidden}</style>
<dock-panel style="height:803px;--edge:#164b78">`+col(178,390,[[200.500,36,[t(399.500,165.500,'Model Builder',big+';color:#3b93d6'),ic(693.500,'caret','margin-top:-3px;color:'+B),ic(711,'pin','margin-top:-3px;color:'+B)]],
 [228,20,[ic(407.500,'left'),ic(435.500,'right'),ic(463.500,'up'),ic(491.500,'down'),ic(519.500,'eye'),ic(547.500,'listup'),ic(576,'listdn'),ic(603.500,'list'),ic(625.500,'caret',gray,.9)]]])+
 `<div class="box"><div class="rows">`+tree([[0,o,'root','_3Phase PMSM (1).mph',152,'(root)',35],[1,o,'globe','Global Definitions',120],[2,z,'pi','Parameters 1',83],[2,z,'dmi','Default Model Inputs',139.5],[2,z,'matg','Materials',60],[1,o,'comp','Component 1',89,'(comp1)',52.5],[2,o,'defs','Definitions',71],[3,z,'vars','Variables 1',70],[3,z,'bsys','Boundary System 1',124.5,'(sys1)',35.5],[3,c,'view','View 1',42.5],[2,c,'geom','Geometry 1',75],[2,c,'mat','Materials',60],[2,c,'magnet','Magnetic Fields',103,'(mf)',25.5],[2,z,'mesh','Mesh 1',45],[1,c,'study','Study 1',47.5],[1,o,'results','Results',45.5],[2,c,'datasets','Datasets',56],[2,z,'derived','Derived Values',97],[2,c,'tables','Tables',40],[2,c,'pg','1D Plot Group 5',104.5],[2,o,'pg','1D Plot Group 6',105],[3,z,'global','Global 1',54],[2,c,'flux','Magnetic Flux Density Norm (mf)',218.5],[2,o,'export','Export',42],[3,z,'animS','Animation 1',79],[2,z,'reports','Reports',50]],20)+
 `</div><scroll-bar dir="h" parts="p259,d17"></scroll-bar></div></dock-panel>`);

const hd='background:#444446;font-size:16px';
const head=(y,s,w,open=true)=>[y,32,[ic(741,open?'caret':'caretR',open?'color:#5c5c5e':'color:#fff'),t(761,w,s)],hd];
const box=(x,w,h,cls,inner='')=>[x,w,`<div class="${cls}" style="width:${w}px;height:${h}px">${inner}</div>`];
const cb=x=>box(x,18,16,'cb');
const chk=(y,s,w)=>[y,16,[cb(736),t(760,w,s)]];
const lim=(y,s,w,v,vw)=>[y,24,[t(744,w,s,'color:#707072'),box(836,212,24,'inp dis',ft(vw,v))]];
el('settings-panel',`<style>.body{display:flex;flex:none}.left{width:333px;height:706px;overflow:hidden;flex:none}.fs{margin:0 3px 0 4px;width:326px;border:1px solid #6a6a6c;height:145px}.gap{background:#18181a}</style>
<dock-panel style="height:803px">`+col(178,729,[[200.500,36,[t(738,94.500,'Settings',big),ic(1056.500,'caret',gray+';margin-top:-2px'),ic(1074,'pin',gray+';margin-top:-2px')]],[233,24,[t(738,118,'1D Plot Group','font-size:17px')]],[257,18,[ic(746.500,'plotS'),t(761.500,26,'Plot')]]])+
 `<div class="body" style="margin-top:7px"><div class="left">`+col(273,729,[
 [299,28,[t(735,38.500,'Label:'),box(787,234,24,'inp',ft(105.500,'1D Plot Group 6','margin-left:-1px')),box(1031,25,28,'btn',icon('gotoL'))]],
 head(340,'Data',36),
 [382,28,[t(735,53,'Dataset:'),box(847,174,26,'sel',`<div style="margin-left:15px;width:127px;overflow:hidden">${ft(128.500,'Study 1/Solution 1 (')}</div>${icon('caret','margin-left:13px;color:#fff;transform:scale(.85)')}`),box(1031,25,28,'btn',icon('gotoS'))]],
 [417,26,[t(735,99,'Time selection:'),box(847,208,26,'sel',`<div style="margin-left:15px">${ft(18,'All')}</div>${icon('caret','margin-left:156px;color:#fff;transform:scale(.85)')}`)]],
 head(460,'Title',32,false),head(495,'Plot Settings',96),
 [535,24,[t(735,78,'x-axis label:'),cb(826),box(863,192,24,'inp dis',ft(53,'Time (s)','margin-left:-1px'))]],
 [567,24,[t(735,78,'y-axis label:'),cb(826),box(863,192,24,'inp dis',ft(99,'Coil current (A)','margin-left:-1px'))]],
 chk(596,'Two y-axes',72.500),chk(622,'Flip the x- and y-axes',141),
 head(661,'Axis',29),
 ])+`<div class="fs" style="margin-top:23px">`+col(701,734,[[698.500,18,[[741,149,`<div class="r gap" style="width:149px;padding-left:3px"><div class="cb" style="width:18px;height:16px;margin-right:6px"></div>${ft(118,'Manual axis limits')}</div>`]]],
 lim(728,'x minimum:',77,'-0.02684',57),lim(760,'x maximum:',80,'1.02684',50),lim(792,'y minimum:',77,'-53.61689',65),lim(824,'y maximum:',80,'54.68687',58)])+`</div>`+
 col(845,729,[chk(862,'Preserve aspect ratio',137),chk(888,'x-axis log scale',101),chk(914,'y-axis log scale',101),head(953,'Grid',31)])+
 `</div><scroll-bar dir="v" parts="p411,d252"></scroll-bar></div></dock-panel>`);

el('plot-view',()=>{const X=v=>(1191.2+v*501.8-1091),Y=v=>(459-v*2.76-247);
 let s='';for(let i=0;i<=5;i++){const x=Math.round(X(i*.2));s+=`<path d="M${x} 61V360" stroke="#454547" stroke-width="1.600"/>`}
 for(let v=-50;v<=50;v+=10){const y=Math.round(Y(v));s+=`<path d="M88 ${y}H615" stroke="#3c3c3e" stroke-width="1.600"/>`}
 s+=`<rect x="87.500" y="61" width="527" height="299" fill="none" stroke="#8c8c8e" stroke-width="1.600"/>`;
 for(let i=0;i<=5;i++){const x=Math.round(X(i*.2));s+=`<path d="M${x} 61v7M${x} 360v-7" stroke="#b2b2b4" stroke-width="1.500"/><text x="${x+.5}" y="380" text-anchor="middle">${['0','0.2','0.4','0.6','0.8','1'][i]}</text>`}
 for(let v=-50;v<=50;v+=10){const y=Math.round(Y(v));s+=`<path d="M88 ${y}h7M615 ${y}h-7" stroke="#b2b2b4" stroke-width="1.500"/><text x="82" y="${y+5}" text-anchor="end">${v}</text>`}
 const D={'#7f7ff0':[43.5,15.5,-20.5,-45.8,-48,-25,10,40.3,50,34,1],'#5fe05f':[-43.5,-49,-29.5,5,37,50.3,37.7,5.7,-29,-49,-44],'#e84b4b':[0,33.5,50,41,10.5,-25,-47.5,-46,-21,15,43]};
 for(const k in D)s+=`<polyline fill="none" stroke="${k}" stroke-width="1.150" points="${D[k].map((v,i)=>X(i/10).toFixed(1)+','+Y(v).toFixed(1)).join(' ')}"/>`;
 s+=`<rect x="448" y="81" width="147" height="74" fill="#454547"/><rect x="451.500" y="77.500" width="147" height="75" fill="#232325" stroke="#6a6a6c"/>`;
 ['#8c8cff','#66ff66','#ff5050'].forEach((k,i)=>{s+=`<path d="M460 ${92.500+i*22}h34" stroke="${k}"/><text x="501" y="${98.500+i*22}" textLength="87" lengthAdjust="spacingAndGlyphs">Coil current</text>`});
 s+=`<text x="327.500" y="34.500" textLength="47" lengthAdjust="spacingAndGlyphs">Global</text><text x="321" y="397" textLength="62" lengthAdjust="spacingAndGlyphs">Time (s)</text><text transform="translate(13.500 266) rotate(-90)" textLength="113" lengthAdjust="spacingAndGlyphs">Coil current (A)</text>`;
 s+=`<g transform="translate(587.500 8)">${comsol}</g>`;
 return `<style>:host{height:405px}svg{display:block}text{font:14px "DejaVu Sans",sans-serif;fill:#e6e6e6}</style><svg width="622" height="405">${s}</svg>`});

const tab=(x,w,tx,tw,s,cls,h,xx)=>[x,w,`<div class="r" style="width:100%;padding-left:${tx-x-(cls==='act'?1:0)}px">${ft(tw,s)}${xx?icon('x',`margin-left:${xx-6-tx-tw}px;color:#c9d2dc;margin-top:-3px`):''}</div>`,`height:${h}px;align-self:flex-end;`+(cls==='act'?'border:1px solid #6a6a6c;border-bottom:0;background:#18181a;margin-bottom:-1px;padding-bottom:0':'background:#565656;padding-top:1px')];
el('graphics-panel',`<style>.tabs{border-bottom:1px solid #6a6a6c;font-size:16.500px;height:38px;flex:none}</style>
<dock-panel style="height:476px"><div class="tabs">`+row(1091,37,[tab(1096,78,1102,65.500,'Graphics','act',33),tab(1184,183,1189,148.500,'Convergence Plot 1','',31,1353),ic(1686.500,'caret',gray+';margin-top:12px'),ic(1704,'pin',gray+';margin-top:12px')])+`</div>`+
 col(216,1091,[[235,24,[ic(1109.500,'zin'),ic(1137.500,'zout'),ic(1165,'zbox'),ic(1187,'caret',gray,.9),ic(1215,'extents'),[1234,1,'<div style="width:1px;height:20px;background:#666"></div>'],ic(1252.500,'gridv'),ic(1280.500,'gridh'),ic(1309,'legendi'),ic(1337,'aperture'),ic(1359.500,'caret',gray,.9),ic(1387,'camera'),ic(1415,'printer')]]])+
 `<plot-view></plot-view></dock-panel>`);

const nd='Number of degrees of freedom solved for: 11967.',sf='Saved file: D:\\Download\\_3Phase PMSM (1).mph';
const msgs=[['4:50',nd],['4:52',sf],['4:52',sf],['4:52',sf],['4:52',sf],['4:52',sf],['4:53',nd],['4:53',nd],['4:53','Solution time (Study 1): 22 s.'],['4:54',sf],['4:55',nd],['4:55','Solution time (Study 1): 30 s.']];
el('messages-panel',`<style>.tabs{border-bottom:1px solid #6a6a6c;font-size:16.500px;height:38px;flex:none}.box{flex:none;margin:5px 5px 0;width:814px;height:240px;border:1px solid #6a6a6c;display:flex;justify-content:space-between}</style>
<dock-panel style="height:321px"><div class="tabs">`+row(1091,37,[tab(1096,110,1103,72.500,'Messages','act',32,1191),tab(1216,75,1221,65.500,'Progress','',31),tab(1301,38,1306,27.500,'Log','',31),tab(1349,139,1354,105.500,'Evaluation 2D','',31,1474),ic(1888,'caret',gray+';margin-top:12px'),ic(1905.500,'pin',gray+';margin-top:12px')])+`</div>`+
 col(698,1091,[[717.500,20,[ic(1110,'broom')]]])+
 `<div class="box" style="margin-top:5.5px"><div>`+col(734,1097,msgs.map(([h,m],i)=>[742.5+i*20,20,[t(1098.500,m===nd?482:m===sf?474:342,`[Sep 21, 2023 ${h} PM] ${m}`)]]))+`</div><scroll-bar dir="v" parts="d38,p145,d13"></scroll-bar></div></dock-panel>`);

el('add-physics',`<style>.body{display:flex;flex:none;justify-content:space-between;width:194px}.left{width:171px;height:380px;overflow:hidden;flex:none}.list{margin:7px 0 0 5px;border:1px solid #6a6a6c;border-right:0;border-bottom:0;height:336px;width:166px;overflow:hidden;display:flex;flex-direction:column}</style>
<dock-panel style="height:476px">`+col(178,1721,[[200.500,36,[t(1730,128.500,'Add Phys...',big),ic(1870,'caret',gray+';margin-top:-2px'),ic(1887.500,'pin',gray+';margin-top:-2px'),ic(1905.500,'x',gray+';margin-top:-2px')]],[229,20,[ic(1739,'plus'),t(1754,139,'Add to Component 1',dim)]],[253,20,[ic(1739,'plus'),t(1754,111,'Add to Selection',dim)]]])+
 `<div class="body" style="margin-top:6px"><div class="left">`+col(269,1721,[[292,26,[[1726,79,'<div class="inp" style="width:79px;height:25px;border-right:0"></div>'],box(1814,76,26,'btn',ft(44,'Search'))]]])+
 `<div class="list">`+tree([[0,o,'recent','Recently Used',92.5],[1,z,'magnet','Magnetic Fields',104],[1,z,'circ','Electrical Circuit',106],[0,c,'acdc','AC/DC',45],[0,c,'acou','Acoustics',62],[0,c,'chem','Chemical Species',114],[0,c,'echem','Electrochemistry',109],[0,c,'fluid','Fluid Flow',67],[0,c,'heat','Heat Transfer',88],[0,c,'optics','Optics',42],[0,c,'plasma','Plasma',46],[0,c,'radio','Radio Frequency',110],[0,c,'semi','Semiconductor',100],[0,c,'struct','Structural Mechanics',132],[0,c,'math','Mathematics',85]])+
 `</div></div><scroll-bar dir="v" parts="p186,d150"></scroll-bar></div></dock-panel>`);

el('status-bar',`<style>:host{height:40px}</style>`+col(980,0,[[1005.500,20,[t(1074,112,'1.88 GB | 2.11 GB')]]]));
const dot=(x,w=8,cc='#999')=>[x,w,`<div style="width:${w}px;height:4px;border-radius:2px;background:${cc}"></div>`];
el('task-bar',`<style>:host{height:60px;background:linear-gradient(90deg,#1f1f22,#222124 45%,#261f20 60%,#212222 80%,#202221);border-top:1px solid #48484a;display:flex;color:#fff}.left{width:1180px}.tile{width:50px;height:50px;border:1px solid #3a393b;border-radius:5px;background:#2e2d30;display:flex;flex-direction:column;align-items:center;justify-content:flex-end}</style>
<div class="left">`+row(0,59,[
 ic(794.500,'win','margin-top:-1px'),[836,30,icon('edge')+'<i></i>','flex-direction:column;height:39px;margin-top:9px;justify-content:space-between;'],ic(906,'files','margin-top:-1px'),ic(960.500,'store','margin-top:-1px'),
 [1001,36,icon('chrome'),'margin-top:-7px'],[1056,36,icon('whats'),'margin-top:-7px'],[1101,50,`<div class="tile">${icon('comsol')}<div style="width:20px;height:4px;border-radius:2px;background:#df87d6;margin-top:7px"></div></div>`,'margin-top:-1px']]).replace('<i></i>','<div style="width:8px;height:4px;border-radius:2px;background:#999"></div>')+
 row(0,4,[dot(1012),dot(1067)],'margin-top:-10px')+
 `</div><div>`+row(1180,59,[ic(1626,'chev'),ic(1666,'net'),ic(1706,'wifi'),ic(1735.500,'mute'),ic(1766,'batt'),[1797,69,`<div style="line-height:20px;width:69px">${ft(54,'4:55 PM','margin-left:15px')}${ft(69,'9/21/2023')}</div>`,'margin-top:-2px'],[1873,24,`<div style="width:24px;height:20px;border-radius:10px;background:#df87d6;color:#222;font-size:12px;display:flex;align-items:center;justify-content:center">${ft(13.500,'20')}</div>`,'margin-top:-1px']])+`</div>`);

el('comsol-app',`<style>:host{width:1920px;height:1080px;display:flex;flex-direction:column;background:#18181a}:host>*{flex:none}.work{display:flex;gap:6px;padding:5px 4px 0;height:808px;flex:none}.work>*{flex:none}.rt{display:flex;flex-direction:column;gap:6px;width:826px}.top{display:flex;gap:6px}</style>
<title-bar></title-bar><ribbon-tabs></ribbon-tabs><ribbon-bar></ribbon-bar>
<div class="work"><recovery-files style="width:379px"></recovery-files><model-builder style="width:333px"></model-builder><settings-panel style="width:356px"></settings-panel><div class="rt"><div class="top"><graphics-panel style="width:624px"></graphics-panel><add-physics style="width:196px"></add-physics></div><messages-panel></messages-panel></div></div>
<status-bar></status-bar><task-bar></task-bar>`);
</script>
</body>
</html>
